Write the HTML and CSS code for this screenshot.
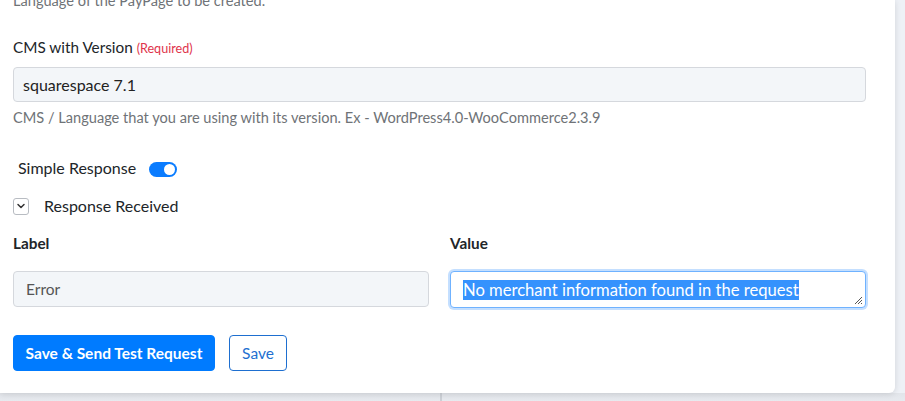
FILE: index.html
```html
<!DOCTYPE html>
<html lang="en">
<head>
  <meta charset="UTF-8">
  <title>Test Request</title>
  <link rel="stylesheet" href="styles.css">
</head>
<body>

  <div class="card">
    <p class="help first">Language of the PayPage to be created.</p>

    <!-- CMS version -->
    <div class="field">
      <label class="field-label">CMS with Version <span class="req">(Required)</span></label>
      <div class="input">squarespace 7.1</div>
      <p class="help">CMS / Language that you are using with its version. Ex - WordPress4.0-WooCommerce2.3.9</p>
    </div>

    <div class="switch-row">
      <span>Simple Response</span>
      <span class="switch"><span class="knob"></span></span>
    </div>

    <div class="collapse-row">
      <span class="chevron">
        <svg width="10" height="10" viewBox="0 0 10 10"><path d="M2 3.5 L5 6.5 L8 3.5" fill="none" stroke="#333" stroke-width="1.5" stroke-linecap="round" stroke-linejoin="round"/></svg>
      </span>
      <span>Response Received</span>
    </div>

    <!-- response pairs -->
    <div class="pairs">
      <div class="col">
        <div class="col-title">Label</div>
        <div class="input small">Error</div>
      </div>
      <div class="col">
        <div class="col-title">Value</div>
        <div class="textarea">
          <span class="selected">No merchant information found in the request</span>
          <svg class="grip" width="9" height="9" viewBox="0 0 9 9"><path d="M1 8 L8 1 M4 8 L8 4 M7 8 L8 7" stroke="#555" stroke-width="1"/></svg>
        </div>
      </div>
    </div>

    <div class="actions">
      <button class="btn primary">Save &amp; Send Test Request</button>
      <button class="btn outline">Save</button>
    </div>
  </div>

  <div class="below">
    <div class="below-left"></div>
    <div class="below-right"></div>
  </div>

</body>
</html>
```

FILE: styles.css
```css
body {
  margin: 0;
  background: #eef1f6;
  font-family: Lato, "Open Sans", sans-serif;
  color: #212529;
  overflow: hidden;
}

.card {
  display: flow-root;
  width: 895px;
  background: #fff;
  padding: 0 0 0 13px;
  border-radius: 0 0 6px 0;
  box-shadow: 0 1px 6px rgba(0, 0, 0, 0.12);
  height: 393px;
  box-sizing: border-box;
  position: relative;
  z-index: 1;
}

.help {
  margin: 0;
  font-size: 14.6px;
  line-height: 20px;
  color: #6f7377;
}

.help.first {
  margin-top: -9px;
}

.field {
  margin-top: 26px;
  width: 853px;
}

.field-label {
  display: block;
  font-size: 15.3px;
  line-height: 20px;
}

.req {
  color: #e0344b;
  font-size: 12.6px;
}

.input {
  margin-top: 8px;
  height: 35px;
  box-sizing: border-box;
  background: #f3f6f9;
  border: 1px solid #d5d8dd;
  border-radius: 4px;
  padding: 0 9px;
  font-size: 16px;
  line-height: 33px;
  color: #222;
}

.field .help {
  margin-top: 6px;
}

.switch-row {
  display: flex;
  align-items: center;
  gap: 13px;
  margin: 30px 0 0 5px;
  font-size: 16px;
  line-height: 20px;
}

.switch {
  width: 28px;
  height: 15px;
  background: #0a7cff;
  border-radius: 8px;
  display: inline-flex;
  align-items: center;
  justify-content: flex-end;
  padding: 0 2px;
  box-sizing: border-box;
  margin-top: 3px;
}

.knob {
  width: 11px;
  height: 11px;
  background: #fff;
  border-radius: 50%;
}

.collapse-row {
  display: flex;
  align-items: center;
  gap: 15px;
  margin-top: 18px;
  font-size: 16px;
  line-height: 20px;
}

.chevron {
  width: 16px;
  height: 17px;
  box-sizing: border-box;
  border: 1px solid #b8bcc2;
  border-radius: 3px;
  display: inline-flex;
  align-items: center;
  justify-content: center;
}

.pairs {
  display: flex;
  gap: 21px;
  margin-top: 17px;
  width: 853px;
}

.col {
  width: 416px;
}

.col-title {
  font-weight: bold;
  font-size: 15.3px;
  line-height: 20px;
  margin-bottom: 18px;
}

.input.small {
  margin-top: 0;
  height: 36px;
  line-height: 34px;
  padding: 0 12px;
  font-size: 15.5px;
  color: #555;
}

.textarea {
  position: relative;
  height: 37px;
  box-sizing: border-box;
  border: 1px solid #6fb2ff;
  box-shadow: 0 0 0 2px #c4dfff;
  border-radius: 4px;
  padding: 6px 12px;
  font-size: 16.6px;
  line-height: 24px;
  background: #fff;
}

.selected {
  background: #3592fd;
  color: #fff;
}

.grip {
  position: absolute;
  right: 2px;
  bottom: 2px;
}

.actions {
  display: flex;
  gap: 14px;
  margin-top: 27px;
}

.btn {
  height: 36px;
  border-radius: 4px;
  font-family: Lato, sans-serif;
  font-size: 15.5px;
  padding: 0;
  cursor: pointer;
}

.btn.primary {
  background: #007bff;
  color: #fff;
  border: 1px solid #007bff;
  font-weight: bold;
  width: 202px;
}

.btn.outline {
  background: #fff;
  color: #1e6fd0;
  border: 1px solid #1e6fd0;
  width: 58px;
}

.below {
  display: flex;
  height: 20px;
  background: linear-gradient(#e2e5ea, #eef1f6);
}

.below-left {
  width: 440px;
  border-right: 2px solid #ccd0d6;
}
```
